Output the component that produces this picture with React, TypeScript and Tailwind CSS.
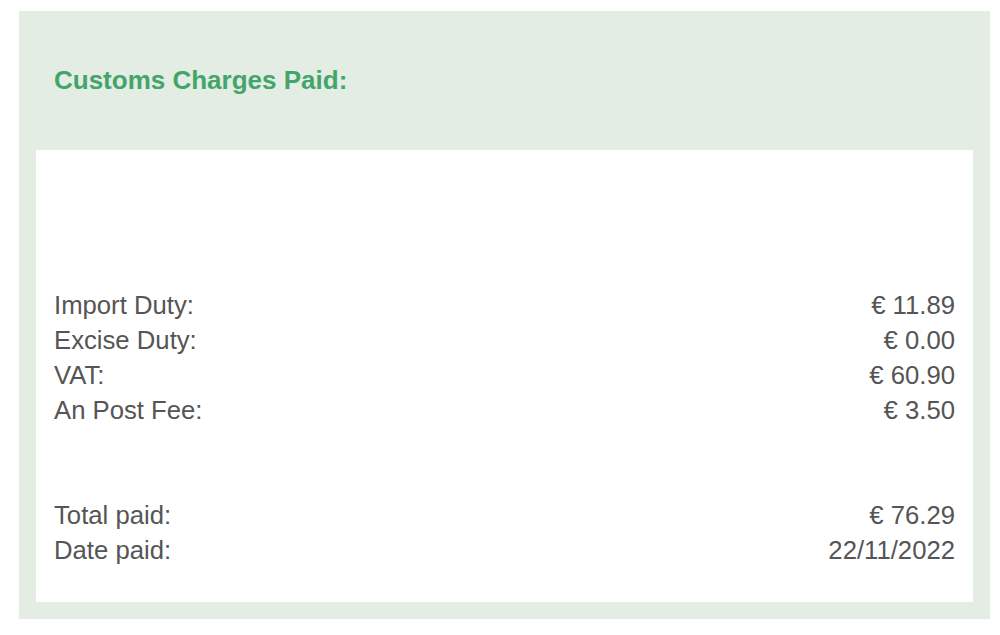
export default function App() {
  const charges = [
    { label: "Import Duty:", value: "€ 11.89" },
    { label: "Excise Duty:", value: "€ 0.00" },
    { label: "VAT:", value: "€ 60.90" },
    { label: "An Post Fee:", value: "€ 3.50" },
  ];
  const totals = [
    { label: "Total paid:", value: "€ 76.29" },
    { label: "Date paid:", value: "22/11/2022" },
  ];

  return (
    <div className="min-h-[635px] bg-white pt-[11px] pl-[19px] font-['Liberation_Sans',Arial,sans-serif]">
      <div className="w-[971px] bg-[#e3ede3] px-[17px] pb-[17px]">
        <div className="flex h-[139px] items-center pl-[18px]">
          <h2 className="text-[26px] font-bold text-[#43a56b]">Customs Charges Paid:</h2>
        </div>
        <div className="bg-white px-[18px] pt-[138px] pb-[34px] text-[25.7px] leading-[35px] text-[#555555]">
          {charges.map((row) => (
            <div key={row.label} className="flex justify-between">
              <span>{row.label}</span>
              <span>{row.value}</span>
            </div>
          ))}
          <div className="h-[70px]" />
          {totals.map((row) => (
            <div key={row.label} className="flex justify-between">
              <span>{row.label}</span>
              <span>{row.value}</span>
            </div>
          ))}
        </div>
      </div>
    </div>
  );
}
